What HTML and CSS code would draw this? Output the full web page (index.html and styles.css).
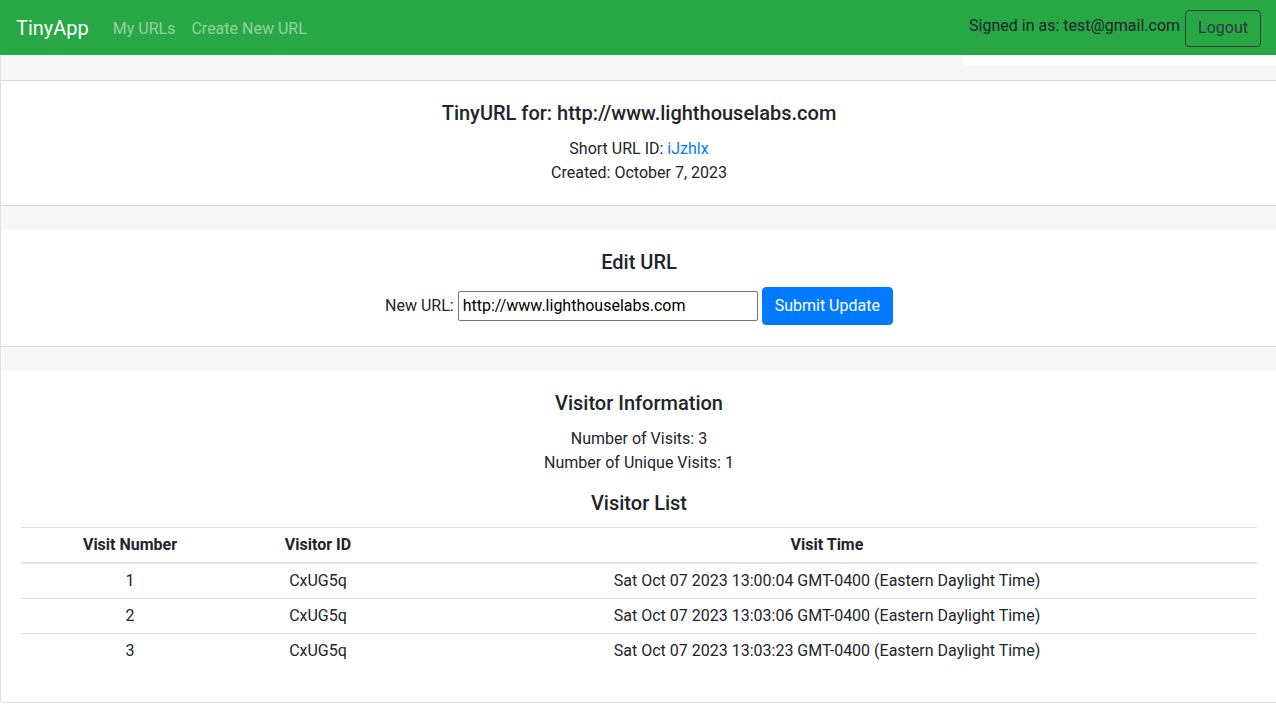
FILE: index.html
```html
<!DOCTYPE html>
<html lang="en">
<head>
<meta charset="utf-8">
<title>TinyApp</title>
<link rel="stylesheet" href="styles.css">
</head>
<body>
<nav class="navbar">
  <div class="nav-left">
    <a class="brand" href="#">TinyApp</a>
    <a class="nav-link" href="#">My URLs</a>
    <a class="nav-link" href="#">Create New URL</a>
  </div>
  <div class="nav-right">
    <span class="signed">Signed in as: test@gmail.com</span>
    <button class="btn-logout">Logout</button>
  </div>
  <div class="nav-strip"></div>
</nav>
<main class="card">
  <div class="card-band band-first"></div>
  <section class="card-body">
    <h5 class="card-title">TinyURL for: http://www.lighthouselabs.com</h5>
    <p class="line">Short URL ID: <a class="link" href="#">iJzhlx</a></p>
    <p class="line">Created: October 7, 2023</p>
  </section>
  <div class="card-band band-top"></div>
  <section class="card-body">
    <h5 class="card-title">Edit URL</h5>
    <form class="edit-form">
      <label class="form-label" for="newurl">New URL:</label>
      <input id="newurl" class="form-input" type="text" value="http://www.lighthouselabs.com">
      <button class="btn-primary" type="button">Submit Update</button>
    </form>
  </section>
  <div class="card-band band-top"></div>
  <section class="card-body last">
    <h5 class="card-title">Visitor Information</h5>
    <p class="line">Number of Visits: 3</p>
    <p class="line">Number of Unique Visits: 1</p>
    <h5 class="card-title list-title">Visitor List</h5>
    <table class="table">
      <thead>
        <tr><th class="c1">Visit Number</th><th class="c2">Visitor ID</th><th>Visit Time</th></tr>
      </thead>
      <tbody>
        <tr><td>1</td><td>CxUG5q</td><td>Sat Oct 07 2023 13:00:04 GMT-0400 (Eastern Daylight Time)</td></tr>
        <tr><td>2</td><td>CxUG5q</td><td>Sat Oct 07 2023 13:03:06 GMT-0400 (Eastern Daylight Time)</td></tr>
        <tr><td>3</td><td>CxUG5q</td><td>Sat Oct 07 2023 13:03:23 GMT-0400 (Eastern Daylight Time)</td></tr>
      </tbody>
    </table>
  </section>
</main>
</body>
</html>
```
FILE: styles.css
```css
* { box-sizing: border-box; }
html, body { margin: 0; padding: 0; }
body {
  font-family: Roboto, "Segoe UI", "Liberation Sans", sans-serif;
  font-size: 16px;
  line-height: 1.5;
  color: #212529;
  background: #fff;
  overflow: hidden;
}
.navbar {
  position: relative;
  height: 55px;
  background: #28a745;
  display: flex;
  align-items: center;
  justify-content: space-between;
  padding: 0 15px 0 16px;
  z-index: 2;
}
.nav-left { display: flex; align-items: center; }
.brand {
  color: #fff;
  font-size: 20px;
  line-height: 30px;
  text-decoration: none;
  margin-right: 16px;
}
.nav-link {
  color: rgba(255,255,255,.5);
  text-decoration: none;
  padding: 0 8px;
  line-height: 24px;
  margin-top: 2px;
}
.nav-link:first-of-type { margin-left: 0; }
.nav-right { display: flex; align-items: center; gap: 5px; }
.signed { color: #212529; margin-top: -4px; }
.btn-logout {
  font-family: inherit;
  font-size: 16px;
  line-height: 24px;
  color: #343a40;
  background: transparent;
  border: 1px solid #343a40;
  border-radius: 4px;
  padding: 5px 12px;
  height: 37px;
  margin-top: 1px;
}
.nav-strip {
  position: absolute;
  top: 100%;
  right: 0;
  width: 314px;
  height: 10px;
  background: #fff;
}
.card {
  width: 1278px;
  border: 1px solid rgba(0,0,0,.125);
  border-top: none;
  border-radius: 0 0 4px 4px;
  text-align: center;
}
.card-band {
  height: 25px;
  background: #f7f7f7;
}
.card-band.band-first {
  height: 26px;
  border-bottom: 1px solid rgba(0,0,0,.125);
}
.card-band.band-top {
  height: 25px;
  border-top: 1px solid rgba(0,0,0,.125);
}
.card-body { padding: 20px; }
.card-body.last { padding-bottom: 18px; }
.card-title {
  margin: 0 0 12px;
  font-size: 20px;
  line-height: 24px;
  font-weight: 500;
}
.line { margin: 0; line-height: 24px; }
.link { color: #007bff; text-decoration: none; }
.list-title { margin-top: 16px; }
.edit-form {
  display: flex;
  justify-content: center;
  align-items: center;
  height: 40px;
  padding-bottom: 1px;
}
.form-label { margin-right: 4px; }
.form-input {
  width: 300px;
  height: 30px;
  border: 1px solid #767676;
  border-radius: 2px;
  font-family: inherit;
  font-size: 16px;
  color: #000;
  padding: 1px 4px;
  margin-right: 4px;
}
.btn-primary {
  font-family: inherit;
  font-size: 16px;
  line-height: 24px;
  color: #fff;
  background: #007bff;
  border: 1px solid #007bff;
  border-radius: 4px;
  padding: 6px 12px;
  height: 38px;
}
.table {
  width: 1236px;
  border-collapse: collapse;
  margin-bottom: 16px;
}
.table th, .table td {
  padding: 5px;
  line-height: 24px;
  text-align: center;
  border-top: 1px solid #dee2e6;
}
.table thead th {
  font-weight: 700;
  border-bottom: 2px solid #dee2e6;
}
.table .c1 { width: 218px; }
.table .c2 { width: 158px; }
```
